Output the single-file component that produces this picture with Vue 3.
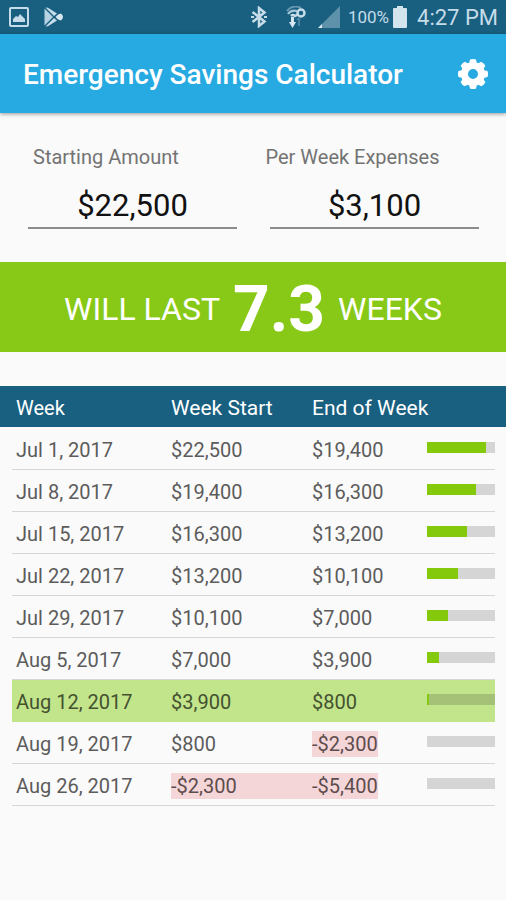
<template>
    <div class="screen">
        <div class="status-bar">
            <div class="status-group notifications">
                <svg width="20" height="20" viewBox="0 0 20 20">
                    <rect x="1" y="1" width="18" height="18" fill="none" stroke="#c6dce8" stroke-width="2" rx="1" />
                    <path d="M4 15v-3l3-3 2 1 2-3 5 5v3z" fill="#c6dce8" />
                </svg>
                <svg width="20" height="20" viewBox="0 0 20 20">
                    <path d="M.5 1.500v17L9 10z" fill="#b7d3e1" />
                    <path d="M1.500.5 4 .8 13 6.500 10 9z M1.500 19.500 4 19.200 13 13.500 10 11z" fill="#c6dce8" />
                    <path d="M14 7.500 17 6.500Q21 10 17 13.500L14 12.500 11.500 10z" fill="#d8e8f0" />
                </svg>
            </div>
            <div class="status-group">
                <svg class="bluetooth" width="16" height="22" viewBox="0 0 16 22">
                    <path d="M1.500 6 13.500 15.500 8 20V2l5.500 4.500L1.500 16" fill="none" stroke="#c6dce8" stroke-width="2.500" />
                    <path d="M0 11h3M13 11h3" stroke="#c6dce8" stroke-width="2" />
                </svg>
                <svg class="hotspot" width="20" height="22" viewBox="0 0 20 22">
                    <path d="M1 5Q7-2 15 2" fill="none" stroke="#6798b0" stroke-width="2" />
                    <path d="M2 8Q5 3.500 11 5" fill="none" stroke="#a9c9d8" stroke-width="2" />
                    <circle cx="15" cy="7" r="3.500" fill="none" stroke="#c6dce8" stroke-width="2.500" />
                    <path d="M5 10q2-2 4 0l3-1.500" fill="none" stroke="#c6dce8" stroke-width="2.500" />
                    <path d="M5 11h3v5h2l-3.500 6L3 16h2z" fill="#d8e8f0" />
                    <path d="M12 20v-6h-2l2.500-3 2.500 3h-1v6z" fill="#4c849f" />
                </svg>
                <svg width="22" height="22" viewBox="0 0 22 22">
                    <path d="M22 0v22H0z" fill="#5e91aa" />
                    <path d="M4 18v4H0z" fill="#d8e8f0" />
                </svg>
                <span class="battery-level">100%</span>
                <svg class="battery" width="16" height="24" viewBox="0 0 16 24">
                    <path d="M5 1h6v2h3q1 0 1 1v18q0 1-1 1H2q-1 0-1-1V4q0-1 1-1h3z" fill="#d3e4ec" />
                </svg>
                <span class="clock">4:27 PM</span>
            </div>
        </div>

        <header class="app-bar">
            <h1>Emergency Savings Calculator</h1>
            <button type="button" class="settings" aria-label="Settings">
                <svg width="30" height="30" viewBox="-15 -15 30 30">
                    <circle r="8.500" fill="none" stroke="#fff" stroke-width="7" />
                    <path v-for="angle in toothAngles" :key="angle" :transform="`rotate(${angle})`" d="M-4-10-3-14.500q3-1 6 0L4-10z" fill="#fff" />
                </svg>
            </button>
        </header>

        <form class="inputs" @submit.prevent>
            <div class="labels">
                <label for="starting">Starting Amount</label>
                <label for="expenses">Per Week Expenses</label>
            </div>
            <div class="fields">
                <input id="starting" v-model="starting" type="text" inputmode="numeric" />
                <input id="expenses" v-model="expenses" type="text" inputmode="numeric" />
            </div>
        </form>

        <div class="result">
            <span>WILL LAST</span>
            <strong>{{ duration }}</strong>
            <span>WEEKS</span>
        </div>

        <table class="schedule">
            <thead>
                <tr>
                    <th class="week">Week</th>
                    <th>Week Start</th>
                    <th>End of Week</th>
                    <th></th>
                </tr>
            </thead>
            <tbody>
                <tr v-for="row in rows" :key="row.week" :class="{ last: row.start > 0 && row.end > 0 && row.end < perWeek }">
                    <td class="week">{{ row.week }}</td>
                    <td :class="{ negative: row.start < 0 }">
                        <span>{{ money(row.start) }}</span>
                    </td>
                    <td>
                        <span :class="{ negative: row.end < 0 }">{{ money(row.end) }}</span>
                    </td>
                    <td class="remaining">
                        <div class="track"><div class="fill" :style="{ width: row.percent + '%' }"></div></div>
                    </td>
                </tr>
            </tbody>
        </table>
    </div>
</template>

<script setup>
import { computed, ref } from 'vue';

const starting = ref('$22,500');
const expenses = ref('$3,100');

const weeks = ['Jul 1, 2017', 'Jul 8, 2017', 'Jul 15, 2017', 'Jul 22, 2017', 'Jul 29, 2017', 'Aug 5, 2017', 'Aug 12, 2017', 'Aug 19, 2017', 'Aug 26, 2017'];
const toothAngles = [0, 45, 90, 135, 180, 225, 270, 315];

const parse = (value) => Number(value.replace(/[^0-9.]/g, '')) || 0;
const money = (value) => `${value < 0 ? '-' : ''}$${Math.abs(value).toLocaleString('en-US')}`;

const total = computed(() => parse(starting.value));
const perWeek = computed(() => parse(expenses.value));

const duration = computed(() => (perWeek.value ? (total.value / perWeek.value).toFixed(1) : '0'));

const rows = computed(() => {
    return weeks.map((week, index) => {
        const start = total.value - perWeek.value * index;
        const end = start - perWeek.value;
        const percent = total.value ? Math.max(0, (end / total.value) * 100) : 0;
        return { week, start, end, percent };
    });
});
</script>

<style>
body {
    margin: 0;
    background: #fafafa;
}
</style>

<style scoped>
.screen {
    min-height: 100vh;
    background: #fafafa;
    color: #5c5c5c;
    font-family: Roboto, 'Liberation Sans', sans-serif;
}

.status-bar {
    display: flex;
    align-items: center;
    justify-content: space-between;
    height: 34px;
    padding: 0 8px 0 9px;
    background: #185f80;
    color: #c6dce8;
}

.status-group {
    display: flex;
    align-items: center;
}

.notifications {
    gap: 15px;
}

.bluetooth {
    margin-right: 19px;
}

.hotspot {
    margin-right: 12px;
}

.battery-level {
    margin-left: 8px;
    font-size: 17px;
}

.battery {
    margin: 0 9px 0 3px;
}

.clock {
    font-size: 22px;
}

.app-bar {
    display: flex;
    align-items: center;
    justify-content: space-between;
    height: 79px;
    padding: 0 18px 0 23px;
    background: #27aae2;
    box-shadow: 0 1px 4px rgba(0, 0, 0, 0.4);
}

h1 {
    margin: 0;
    padding-top: 2px;
    color: #fff;
    font-size: 28px;
    font-weight: 500;
}

.settings {
    display: flex;
    padding: 0;
    border: 0;
    background: none;
}

.labels {
    display: grid;
    grid-template-columns: 1fr 1fr;
    padding: 32px 8px 0 33px;
    color: #737373;
    font-size: 20px;
    line-height: 24px;
}

.fields {
    display: grid;
    grid-template-columns: 1fr 1fr;
    gap: 33px;
    padding: 12px 27px 0 28px;
}

.fields input {
    box-sizing: border-box;
    width: 100%;
    height: 48px;
    padding: 2px 0 0;
    border: 0;
    border-bottom: 2px solid #8b8b8b;
    outline: 0;
    background: none;
    color: #111;
    font-family: inherit;
    font-size: 31px;
    text-align: center;
}

.result {
    display: flex;
    box-sizing: border-box;
    align-items: center;
    justify-content: center;
    gap: 13px;
    height: 90px;
    margin: 33px 0 34px;
    padding-top: 4px;
    background: #88c917;
    color: #fff;
    font-size: 32px;
}

.result strong {
    font-size: 64px;
    font-weight: 700;
}

.schedule {
    display: block;
    text-align: left;
}

.schedule thead,
.schedule tbody {
    display: block;
}

.schedule tbody {
    padding-top: 1px;
}

.schedule tr {
    display: grid;
    box-sizing: border-box;
    grid-template-columns: minmax(0, 159fr) minmax(0, 141fr) minmax(0, 115fr) minmax(0, 68fr);
    align-items: center;
}

.schedule thead tr {
    height: 41px;
    padding: 2px 11px 0 12px;
    background: #185f80;
    color: #fff;
    font-size: 21px;
}

.schedule tbody tr {
    height: 42px;
    margin: 0 11px 0 12px;
    padding-top: 2px;
    border-bottom: 1px solid #d6d6d6;
    font-size: 20px;
    line-height: 26px;
}

.schedule tbody tr.last {
    border-color: #c2e48b;
    background: #c2e48b;
    color: #445230;
}

th,
td {
    padding: 0;
    font-weight: 400;
    white-space: nowrap;
}

.week {
    padding-left: 4px;
}

th.week {
    font-size: 20px;
}

.negative {
    background: #f4d6d8;
    color: #5d4c4d;
}

span.negative {
    display: inline-block;
}

.remaining {
    padding-bottom: 4px;
}

.track {
    height: 11px;
    background: #d5d5d5;
}

.fill {
    height: 100%;
    background: #84c90c;
}

.last .track {
    background: #a5c077;
}
</style>
